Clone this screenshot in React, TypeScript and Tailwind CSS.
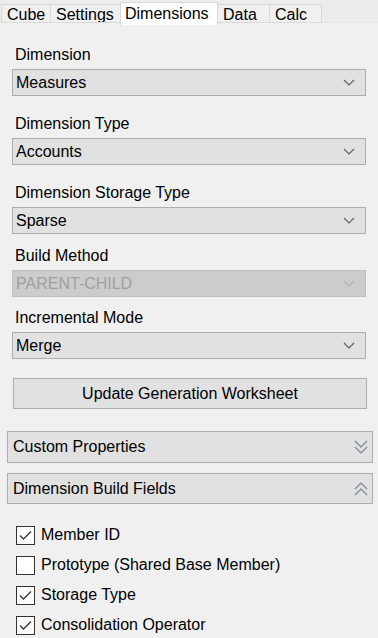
import React from "react";

const font = { fontFamily: '"Liberation Sans", Arial, sans-serif' };

function Chevron({ color = "#606060" }: { color?: string }) {
  return (
    <svg width="12" height="7" viewBox="0 0 12 7" className="shrink-0">
      <polyline points="1,1 6,6 11,1" fill="none" stroke={color} strokeWidth="1.2" />
    </svg>
  );
}

function Select({ value, disabled = false }: { value: string; disabled?: boolean }) {
  return (
    <div
      className={
        "mx-3 h-[27px] flex items-center justify-between pl-[3px] pr-[10px] border " +
        (disabled
          ? "bg-[#cccccc] border-[#bfbfbf] text-[#a0a0a0]"
          : "bg-[#e1e1e1] border-[#adadad] text-black")
      }
    >
      <span className="text-[16px] leading-none">{value}</span>
      <Chevron color={disabled ? "#b0b0b0" : "#606060"} />
    </div>
  );
}

function Label({ text, mt }: { text: string; mt: string }) {
  return <div className={"px-[15px] text-[16px] leading-[20px] text-black mb-1 " + mt}>{text}</div>;
}

function DoubleChevron({ up }: { up?: boolean }) {
  return (
    <svg width="14" height="14" viewBox="0 0 14 14" className="shrink-0">
      {up ? (
        <>
          <polyline points="1,7 7,1 13,7" fill="none" stroke="#7a8699" strokeWidth="1.2" />
          <polyline points="1,13 7,7 13,13" fill="none" stroke="#7a8699" strokeWidth="1.2" />
        </>
      ) : (
        <>
          <polyline points="1,1 7,7 13,1" fill="none" stroke="#7a8699" strokeWidth="1.2" />
          <polyline points="1,7 7,13 13,7" fill="none" stroke="#7a8699" strokeWidth="1.2" />
        </>
      )}
    </svg>
  );
}

function Section({ title, up, mt, h }: { title: string; up?: boolean; mt: string; h: string }) {
  return (
    <div
      className={
        "ml-[7px] mr-[5px] flex items-center justify-between pl-[5px] pr-[4px] bg-[#e1e1e1] border border-[#adadad] " +
        mt +
        " " +
        h
      }
    >
      <span className="text-[16px] leading-none text-black">{title}</span>
      <DoubleChevron up={up} />
    </div>
  );
}

function Check({ label, checked }: { label: string; checked: boolean }) {
  return (
    <div className="flex items-center h-[30px] pl-4">
      <div className="w-[19px] h-[19px] border border-[#333333] bg-white flex items-center justify-center">
        {checked && (
          <svg width="13" height="11" viewBox="0 0 13 11">
            <polyline points="1,5.5 4.5,9 12,1.5" fill="none" stroke="#333333" strokeWidth="1.3" />
          </svg>
        )}
      </div>
      <span className="ml-[6px] text-[16px] leading-none text-black">{label}</span>
    </div>
  );
}

function Tab({ label, active, w }: { label: string; active?: boolean; w: string }) {
  if (active) {
    return (
      <div
        className={
          "h-[23px] -mt-[2px] bg-white border border-b-0 border-[#d9d9d9] flex items-start pl-[4px] pt-px text-[16px] leading-[20px] text-black relative z-10 " +
          w
        }
      >
        {label}
      </div>
    );
  }
  return (
    <div
      className={
        "h-[19px] bg-[#f0f0f0] border border-[#d9d9d9] -ml-px flex items-center pl-[5px] pt-[2px] text-[16px] leading-none text-black overflow-hidden " +
        w
      }
    >
      {label}
    </div>
  );
}

export default function App() {
  return (
    <div className="w-[378px] h-[638px] bg-[#f0f0f0] overflow-hidden" style={font}>
      <div className="h-[23px] bg-[#ececec] flex items-start pt-[4px] border-b border-[#e6e6e6]">
        <Tab label="Cube" w="w-[50px] ml-px" />
        <Tab label="Settings" w="w-[71px]" />
        <Tab label="Dimensions" active w="w-[98px] -ml-px" />
        <Tab label="Data" w="w-[53px] -ml-px" />
        <Tab label="Calc" w="w-[53px]" />
      </div>

      <Label text="Dimension" mt="mt-[22px]" />
      <Select value="Measures" />
      <Label text="Dimension Type" mt="mt-[18px]" />
      <Select value="Accounts" />
      <Label text="Dimension Storage Type" mt="mt-[18px]" />
      <Select value="Sparse" />
      <Label text="Build Method" mt="mt-[12px]" />
      <Select value="PARENT-CHILD" disabled />
      <Label text="Incremental Mode" mt="mt-[11px]" />
      <Select value="Merge" />

      <div className="ml-[13px] mr-[11px] mt-[19px] h-[31px] flex items-center justify-center bg-[#e1e1e1] border border-[#adadad] text-[16px] leading-none text-black">
        Update Generation Worksheet
      </div>

      <Section title="Custom Properties" mt="mt-[22px]" h="h-[32px]" />
      <Section title="Dimension Build Fields" up mt="mt-[10px]" h="h-[31px]" />

      <div className="mt-[16px]">
        <Check label="Member ID" checked />
        <Check label="Prototype (Shared Base Member)" checked={false} />
        <Check label="Storage Type" checked />
        <Check label="Consolidation Operator" checked />
      </div>
    </div>
  );
}
